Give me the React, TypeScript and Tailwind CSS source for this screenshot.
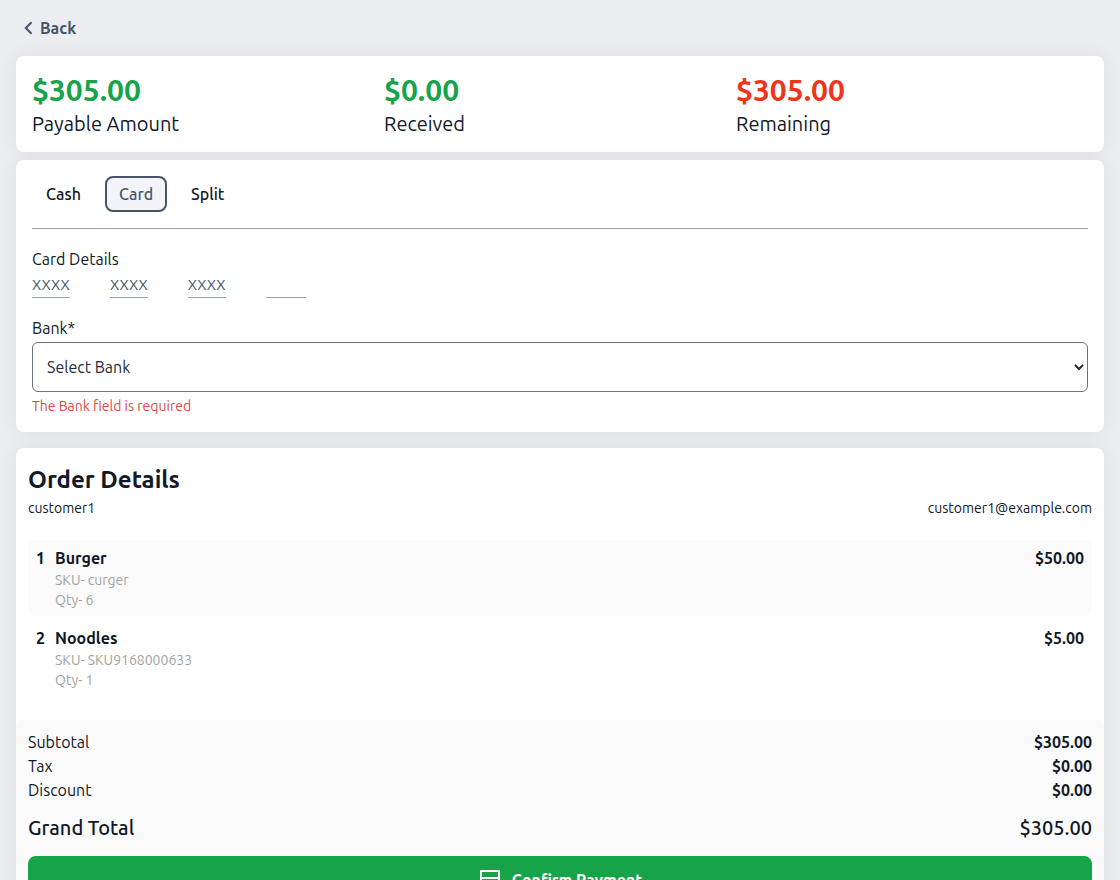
import { useState } from "react";
import { clsx } from "clsx";

const summary = [
  { label: "Payable Amount", value: "$305.00", color: "text-[#16a34a]" },
  { label: "Received", value: "$0.00", color: "text-[#16a34a]" },
  { label: "Remaining", value: "$305.00", color: "text-[#f0341b]" },
];

const methods = ["Cash", "Card", "Split"];

const items = [
  { name: "Burger", sku: "curger", qty: 6, price: "$50.00" },
  { name: "Noodles", sku: "SKU9168000633", qty: 1, price: "$5.00" },
];

const totals = [
  { label: "Subtotal", value: "$305.00" },
  { label: "Tax", value: "$0.00" },
  { label: "Discount", value: "$0.00" },
];

const App = () => {
  const [method, setMethod] = useState("Card");

  return (
    <div className="min-h-screen bg-[#ecedf1] px-4 pb-4 font-['Ubuntu','Noto_Sans',sans-serif] text-base text-[#111827]">
      <header className="flex h-14 items-center px-2">
        <a href="#back" className="flex items-center gap-2 font-bold text-[#475569]">
          <svg
            className="h-3 w-2 overflow-visible"
            viewBox="0 0 8 12"
            fill="none"
            stroke="currentColor"
            strokeWidth="2"
          >
            <path d="M7.6 0.3L1.8 6l5.8 5.7" />
          </svg>
          Back
        </a>
      </header>

      <main>
        <section className="mb-2 grid grid-cols-3 rounded-lg bg-white px-4 pt-4 pb-3 shadow-[0_0_20px_rgba(0,0,0,0.06)]">
          {summary.map((item) => (
            <div key={item.label}>
              <p className={clsx("text-3xl font-bold", item.color)}>{item.value}</p>
              <p className="text-xl leading-8">{item.label}</p>
            </div>
          ))}
        </section>

        <section className="mb-4 rounded-lg bg-white p-4 shadow-[0_0_20px_rgba(0,0,0,0.06)]">
          <div className="flex gap-2.5 border-b border-[#a0a3a8] pb-4">
            {methods.map((m) => (
              <button
                key={m}
                type="button"
                onClick={() => setMethod(m)}
                className={clsx(
                  "rounded-lg border-2 px-3 py-1 font-medium",
                  m === method ? "border-[#475569] bg-[#f2f4f7] text-[#475569]" : "border-transparent"
                )}
              >
                {m}
              </button>
            ))}
          </div>

          <div className="mt-4.5">
            <label htmlFor="card-digits">Card Details</label>
            <div className="mt-0.5 flex gap-10 text-[15px] leading-6 text-[#475569]">
              <span className="border-b border-[#9ca3af]">XXXX</span>
              <span className="border-b border-[#9ca3af]">XXXX</span>
              <span className="border-b border-[#9ca3af]">XXXX</span>
              <input
                id="card-digits"
                maxLength={4}
                className="w-10 border-b border-[#9ca3af] bg-transparent outline-none"
              />
            </div>
          </div>

          <div className="mt-4.5">
            <label htmlFor="bank">Bank*</label>
            <select
              id="bank"
              className="mt-0.5 block h-12.5 w-full rounded-md border border-[#6b7280] bg-white px-2.5 text-[#1f2937]"
            >
              <option>Select Bank</option>
            </select>
            <p className="mt-1 text-sm text-[#dc4a4a]">The Bank field is required</p>
          </div>
        </section>

        <section className="rounded-lg bg-white pt-4 shadow-[0_0_20px_rgba(0,0,0,0.06)]">
          <div className="px-3">
            <h1 className="text-2xl font-bold">Order Details</h1>
            <div className="mt-0.5 flex justify-between text-sm">
              <span>customer1</span>
              <span>customer1@example.com</span>
            </div>
          </div>

          <ul className="mt-5.5 space-y-1 px-3 pb-6">
            {items.map((item, index) => (
              <li
                key={item.name}
                className={clsx("flex gap-2.5 rounded-lg px-2 py-1.5", index % 2 === 0 && "bg-neutral-50")}
              >
                <span className="font-bold">{index + 1}</span>
                <div className="flex-1">
                  <p className="font-bold">{item.name}</p>
                  <p className="text-sm text-[#a3a3a3]">SKU- {item.sku}</p>
                  <p className="text-sm text-[#a3a3a3]">Qty- {item.qty}</p>
                </div>
                <span className="font-bold">{item.price}</span>
              </li>
            ))}
          </ul>

          <div className="rounded-lg bg-neutral-50 px-3 pt-2.5 pb-3">
            {totals.map((row) => (
              <div key={row.label} className="flex justify-between">
                <span>{row.label}</span>
                <span className="font-bold">{row.value}</span>
              </div>
            ))}
            <div className="mt-3 flex justify-between text-xl font-medium">
              <span>Grand Total</span>
              <span>$305.00</span>
            </div>
            <button
              type="button"
              className="mt-3.5 flex h-12 w-full items-center justify-center gap-2.5 rounded-lg bg-[#16a34a] font-bold text-white"
            >
              <svg
                className="h-6 w-6"
                viewBox="0 0 24 24"
                fill="none"
                stroke="currentColor"
                strokeWidth="2"
                strokeLinejoin="round"
              >
                <path d="M3 3h18v18H3zM3 10h18M3 16h18" />
              </svg>
              Confirm Payment
            </button>
          </div>
        </section>
      </main>
    </div>
  );
};

export default App;
